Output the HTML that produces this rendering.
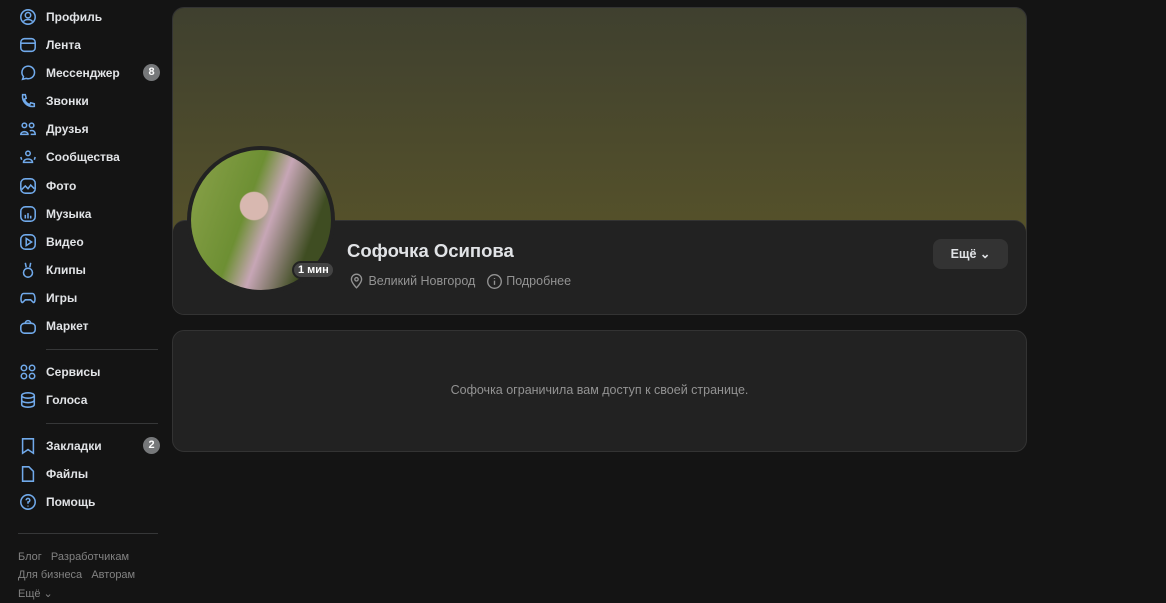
<!DOCTYPE html><html><head><meta charset="utf-8"><style>
body{margin:0;width:1166px;height:603px;background:#141414;font-family:"Liberation Sans",sans-serif;overflow:hidden;position:relative}
.nav{position:absolute;left:18px;top:0;width:142px}
.it{position:absolute;left:0;height:20px;display:flex;align-items:center;color:#e1e3e6;font-size:12px;font-weight:bold}
.it svg{width:18px;height:18px;margin-right:9px;margin-left:1px}
.badge{position:absolute;left:125px;width:17px;height:17px;border-radius:50%;background:#76787a;color:#fff;font-size:11px;font-weight:bold;text-align:center;line-height:17px}
.sep{position:absolute;left:28px;width:112px;height:1px;background:#363738}
.ft{position:absolute;font-size:11px;color:#828282}
.card{position:absolute;left:172px;width:853px;border:1px solid #333;border-radius:12px;background:#222}
</style></head><body>
<div class="nav">
<div class="it" style="top:7px"><svg viewBox="0 0 20 20" fill="none" stroke="#71aaeb" stroke-width="1.7"><circle cx="10" cy="10" r="8"/><circle cx="10" cy="8" r="3"/><path d="M5 15c2-3 8-3 10 0"/></svg>Профиль</div>
<div class="it" style="top:35px"><svg viewBox="0 0 20 20" fill="none" stroke="#71aaeb" stroke-width="1.7"><rect x="2" y="3" width="16" height="14" rx="4"/><path d="M2 8h16"/></svg>Лента</div>
<div class="it" style="top:63px"><svg viewBox="0 0 20 20" fill="none" stroke="#71aaeb" stroke-width="1.7"><path d="M4 17l1-3a7 7 0 1 1 3 2z"/></svg>Мессенджер</div>
<div class="badge" style="top:64px">8</div>
<div class="it" style="top:91px"><svg viewBox="0 0 20 20" fill="none" stroke="#71aaeb" stroke-width="1.7"><path d="M4 3l3 0 1 4-2 1c1 3 3 5 6 6l1-2 4 1v3c-8 1-14-5-13-13z"/></svg>Звонки</div>
<div class="it" style="top:119px"><svg viewBox="0 0 20 20" fill="none" stroke="#71aaeb" stroke-width="1.7"><circle cx="6" cy="6" r="2.5"/><circle cx="14" cy="6" r="2.5"/><path d="M2 16c0-4 8-4 8 0zM12 12c3-1 6 0 6 4h-5"/></svg>Друзья</div>
<div class="it" style="top:147px"><svg viewBox="0 0 20 20" fill="none" stroke="#71aaeb" stroke-width="1.7"><circle cx="10" cy="6" r="2.5"/><path d="M5 16c0-5 10-5 10 0z"/><path d="M2 10l1 3M18 10l-1 3"/></svg>Сообщества</div>
<div class="it" style="top:176px"><svg viewBox="0 0 20 20" fill="none" stroke="#71aaeb" stroke-width="1.7"><rect x="2" y="2" width="16" height="16" rx="5"/><path d="M3 14l4-4 3 3 3-4 4 4"/></svg>Фото</div>
<div class="it" style="top:204px"><svg viewBox="0 0 20 20" fill="none" stroke="#71aaeb" stroke-width="1.7"><rect x="2" y="2" width="16" height="16" rx="5"/><path d="M7 15v-4M10 15V9M13 15v-3"/></svg>Музыка</div>
<div class="it" style="top:232px"><svg viewBox="0 0 20 20" fill="none" stroke="#71aaeb" stroke-width="1.7"><rect x="2" y="2" width="16" height="16" rx="5"/><path d="M8 6v8l6-4z"/></svg>Видео</div>
<div class="it" style="top:260px"><svg viewBox="0 0 20 20" fill="none" stroke="#71aaeb" stroke-width="1.7"><circle cx="10" cy="13" r="5"/><path d="M7 2l1 5M13 2l-1 5"/></svg>Клипы</div>
<div class="it" style="top:288px"><svg viewBox="0 0 20 20" fill="none" stroke="#71aaeb" stroke-width="1.7"><path d="M5 5h10c3 0 4 10 1 10l-3-3H7l-3 3C1 15 2 5 5 5z"/></svg>Игры</div>
<div class="it" style="top:316px"><svg viewBox="0 0 20 20" fill="none" stroke="#71aaeb" stroke-width="1.7"><rect x="2" y="7" width="16" height="11" rx="4"/><path d="M7 7a3 3 0 0 1 6 0"/></svg>Маркет</div>
<div class="sep" style="top:349px"></div>
<div class="it" style="top:362px"><svg viewBox="0 0 20 20" fill="none" stroke="#71aaeb" stroke-width="1.7"><circle cx="5.5" cy="5.5" r="3"/><circle cx="14.5" cy="5.5" r="3"/><circle cx="5.5" cy="14.5" r="3"/><circle cx="14.5" cy="14.5" r="3"/></svg>Сервисы</div>
<div class="it" style="top:390px"><svg viewBox="0 0 20 20" fill="none" stroke="#71aaeb" stroke-width="1.7"><ellipse cx="10" cy="5" rx="7" ry="3"/><path d="M3 5v10c0 4 14 4 14 0V5M3 10c0 4 14 4 14 0"/></svg>Голоса</div>
<div class="sep" style="top:423px"></div>
<div class="it" style="top:436px"><svg viewBox="0 0 20 20" fill="none" stroke="#71aaeb" stroke-width="1.7"><path d="M4 2h12v16l-6-4-6 4z"/></svg>Закладки</div>
<div class="badge" style="top:437px">2</div>
<div class="it" style="top:464px"><svg viewBox="0 0 20 20" fill="none" stroke="#71aaeb" stroke-width="1.7"><path d="M4 2h7l5 5v11H4z"/></svg>Файлы</div>
<div class="it" style="top:492px"><svg viewBox="0 0 20 20" fill="none" stroke="#71aaeb" stroke-width="1.7"><circle cx="10" cy="10" r="8"/><path d="M8 8a2 2 0 1 1 2 2v2M10 14v1"/></svg>Помощь</div>
<div class="sep" style="top:533px;left:0;width:140px"></div>
<div class="ft" style="top:551px;left:0">Блог&nbsp;&nbsp;&nbsp;Разработчикам</div>
<div class="ft" style="top:569px;left:0">Для бизнеса&nbsp;&nbsp;&nbsp;Авторам</div>
<div class="ft" style="top:587px;left:0">Ещё ⌄</div>
</div>
<div class="card" style="top:7px;height:306px;overflow:hidden">
<div style="position:absolute;left:0;top:0;right:0;height:230px;background:linear-gradient(#3f402f,#56522a)"></div>
<div style="position:absolute;left:0;top:212px;right:0;bottom:0;background:#222;border-top:1px solid #333;border-radius:12px 12px 0 0"></div>
<div style="position:absolute;left:14px;top:138px;width:148px;height:148px;border-radius:50%;background:#222"></div>
<div style="position:absolute;left:18px;top:142px;width:140px;height:140px;border-radius:50%;background:radial-gradient(circle at 45% 40%,#d8b8b0 0 12%,transparent 13%),linear-gradient(110deg,#8aa24a,#6d8f33 40%,#c7a6b6 55%,#3f4d22 80%);"></div>
<div style="position:absolute;left:119px;top:253px;background:#444;border:2px solid #222;border-radius:9px;color:#fff;font-size:11px;font-weight:bold;padding:1px 4px">1 мин</div>
<div style="position:absolute;left:174px;top:232px;color:#e1e3e6;font-size:18.5px;font-weight:bold">Софочка Осипова</div>
<div style="position:absolute;left:175px;top:264px;color:#939393;font-size:12.5px;display:flex;align-items:center">
<svg width="17" height="18" viewBox="0 0 20 20" fill="none" stroke="#939393" stroke-width="1.6"><path d="M10 18s-6-6-6-10a6 6 0 0 1 12 0c0 4-6 10-6 10z"/><circle cx="10" cy="8" r="2"/></svg>&nbsp;Великий Новгород&nbsp;&nbsp;&nbsp;
<svg width="17" height="17" viewBox="0 0 20 20" fill="none" stroke="#939393" stroke-width="1.6"><circle cx="10" cy="10" r="8"/><path d="M10 9v5M10 6v1"/></svg>&nbsp;Подробнее</div>
<div style="position:absolute;left:760px;top:231px;width:75px;height:30px;border-radius:8px;background:#333;color:#e1e3e6;font-size:12.5px;font-weight:bold;line-height:30px;text-align:center">Ещё ⌄</div>
</div>
<div class="card" style="top:330px;height:120px">
<div style="text-align:center;margin-top:52px;color:#939393;font-size:12.5px">Софочка ограничила вам доступ к своей странице.</div>
</div>
</body></html>
